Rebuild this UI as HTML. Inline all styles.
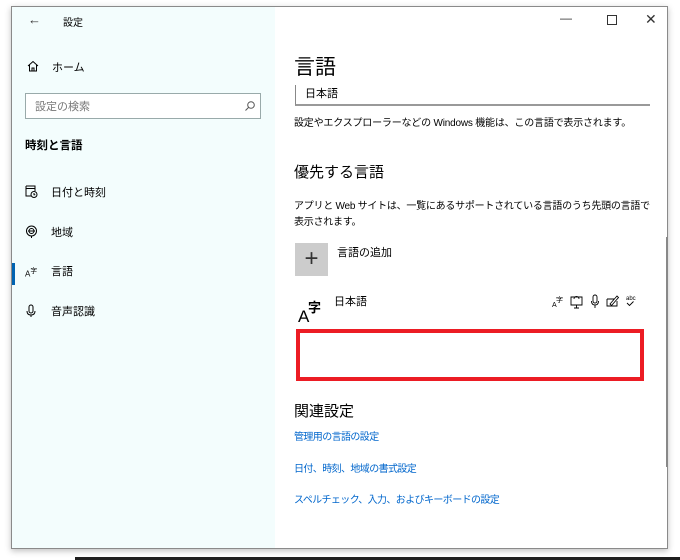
<!DOCTYPE html>
<html><head><meta charset="utf-8"><style>
*{margin:0;padding:0;box-sizing:border-box}
body{width:680px;height:560px;background:#fff;position:relative;overflow:hidden;font-family:"Liberation Sans","Noto Sans CJK JP",sans-serif;color:#000}
.win{position:absolute;left:11px;top:6px;width:657px;height:543px;border:1px solid #8a8a8a;background:#fff;box-shadow:0 2px 6px rgba(0,0,0,.25)}
.side{position:absolute;left:0;top:0;width:263px;height:541px;background:#f3fdfd}
.t{position:absolute;white-space:nowrap}
a{color:#0066cc;text-decoration:none}
</style></head><body>
<div class="win">
 <div class="side">
  <div class="t" style="left:16px;top:5px;font-size:13px;color:#333">←</div>
  <div class="t" style="left:51px;top:7px;font-size:10px">設定</div>
  <svg class="t" style="left:15px;top:53px" width="12" height="12" viewBox="0 0 12 12"><path d="M1 6L6 1.5 11 6M2.5 5v6h7V5M5 11V8h2v3" fill="none" stroke="#000" stroke-width="1"/></svg>
  <div class="t" style="left:40px;top:52px;font-size:11px">ホーム</div>
  <div class="t" style="left:13px;top:86px;width:236px;height:26px;border:1px solid #9aa;background:#fff"></div>
  <div class="t" style="left:23px;top:91px;font-size:11px;color:#777">設定の検索</div>
  <svg class="t" style="left:232px;top:93px" width="12" height="12" viewBox="0 0 12 12"><circle cx="7" cy="5" r="3.3" fill="none" stroke="#555"/><path d="M4.6 7.4L1.5 10.5" stroke="#555"/></svg>
  <div class="t" style="left:13px;top:130px;font-size:11.5px;font-weight:bold">時刻と言語</div>
  <svg class="t" style="left:13px;top:178px" width="13" height="13" viewBox="0 0 13 13"><path d="M1 1h9v5M1 1v10h5M1 3.5h9" fill="none" stroke="#000"/><circle cx="9" cy="9.5" r="3" fill="none" stroke="#000"/><path d="M9 8v1.7h1.3" fill="none" stroke="#000"/></svg>
  <div class="t" style="left:39px;top:177px;font-size:11px">日付と時刻</div>
  <svg class="t" style="left:13px;top:218px" width="13" height="14" viewBox="0 0 13 14"><circle cx="6.5" cy="6" r="5" fill="none" stroke="#000"/><circle cx="6.5" cy="6" r="2.5" fill="none" stroke="#000"/><path d="M3 6h7M6.5 11v2" stroke="#000"/></svg>
  <div class="t" style="left:39px;top:217px;font-size:11px">地域</div>
  <div class="t" style="left:0;top:256px;width:3px;height:22px;background:#0063b1"></div>
  <div class="t" style="left:13px;top:258px;font-size:8px">A<sup>字</sup></div>
  <div class="t" style="left:39px;top:256px;font-size:11px">言語</div>
  <svg class="t" style="left:14px;top:297px" width="10" height="14" viewBox="0 0 10 14"><rect x="3" y="1" width="4" height="8" rx="2" fill="none" stroke="#000"/><path d="M1 7q0 4 4 4t4-4M5 11v2" fill="none" stroke="#000"/></svg>
  <div class="t" style="left:39px;top:296px;font-size:11px">音声認識</div>
 </div>
 <div class="t" style="left:548px;top:4px;font-size:12px;color:#333">—</div>
 <div class="t" style="left:595px;top:8px;width:10px;height:10px;border:1px solid #333"></div>
 <div class="t" style="left:633px;top:4px;font-size:14px;color:#333">✕</div>
 <div class="t" style="left:282px;top:44px;font-size:21px">言語</div>
 <div class="t" style="left:283px;top:78px;width:355px;height:21px;border-left:1px solid #888;border-bottom:2px solid #999"></div>
 <div class="t" style="left:293px;top:78px;font-size:11px">日本語</div>
 <div class="t" style="left:282px;top:107px;font-size:10px;letter-spacing:-0.2px">設定やエクスプローラーなどの Windows 機能は、この言語で表示されます。</div>
 <div class="t" style="left:282px;top:154px;font-size:15px">優先する言語</div>
 <div class="t" style="left:282px;top:192px;font-size:10px;line-height:16px;letter-spacing:-0.25px">アプリと Web サイトは、一覧にあるサポートされている言語のうち先頭の言語で<br>表示されます。</div>
 <div class="t" style="left:283px;top:236px;width:33px;height:33px;background:#ccc;font-size:24px;line-height:31px;text-align:center;color:#333;font-weight:300">+</div>
 <div class="t" style="left:325px;top:237px;font-size:11px">言語の追加</div>
 <div class="t" style="left:286px;top:300px;font-size:17px">A</div>
 <div class="t" style="left:296px;top:290px;font-size:13px;font-weight:bold">字</div>
 <div class="t" style="left:322px;top:286px;font-size:11px">日本語</div>
 <svg class="t" style="left:540px;top:286px" width="96" height="16" viewBox="0 0 96 16">
  <text x="0" y="14" font-size="7" font-family="Liberation Sans">A</text><text x="4" y="9" font-size="7" font-family="Noto Sans CJK JP">字</text>
  <path d="M19 4h11v8h-11zM22 15h5M24.5 12v3" fill="none" stroke="#000" stroke-width=".9"/><path d="M22 6a2.5 2.5 0 0 1 5 0" fill="none" stroke="#000" stroke-width=".9"/>
  <rect x="41" y="2" width="4" height="8" rx="2" fill="none" stroke="#000" stroke-width=".9"/><path d="M39.5 8q0 4 3.5 4t3.5-4M43 12v3" fill="none" stroke="#000" stroke-width=".9"/>
  <path d="M55 6h7M55 6v7h10v-5M58 11l7-8 1.5 1.5-7 8z" fill="none" stroke="#000" stroke-width=".9"/>
  <text x="74" y="7" font-size="6" font-family="Liberation Sans">abc</text><path d="M75 10l2.5 2.5 4-4" fill="none" stroke="#000" stroke-width=".9"/>
 </svg>
 <div class="t" style="left:284px;top:322px;width:348px;height:52px;border:4px solid #ec1c24"></div>
 <div class="t" style="left:282px;top:393px;font-size:15px">関連設定</div>
 <a class="t" style="left:282px;top:421px;font-size:10px;letter-spacing:-0.6px">管理用の言語の設定</a>
 <a class="t" style="left:282px;top:453px;font-size:10px;letter-spacing:-0.6px">日付、時刻、地域の書式設定</a>
 <a class="t" style="left:282px;top:484px;font-size:10px;letter-spacing:-0.6px">スペルチェック、入力、およびキーボードの設定</a>
 <div class="t" style="left:654px;top:230px;width:2px;height:230px;background:#888"></div>
</div>
<div style="position:absolute;left:75px;top:557px;width:605px;height:3px;background:#1e1e1e"></div>
</body></html>
